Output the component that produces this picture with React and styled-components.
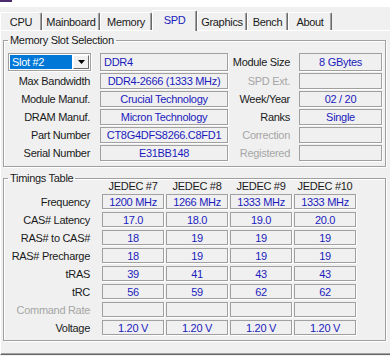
import React from 'react';
import styled, { createGlobalStyle } from 'styled-components';

const GlobalStyle = createGlobalStyle`
  html, body {
    margin: 0;
    padding: 0;
  }
  body {
    background: #f0f0f0;
    font-family: "Liberation Sans", Arial, sans-serif;
    font-size: 11px;
    letter-spacing: -0.3px;
    color: #1a1a1a;
    overflow: hidden;
  }
`;

const Window = styled.div`
  width: 390px;
  height: 356px;
  overflow: hidden;
  background: #f0f0f0;
`;

const TitleStrip = styled.div`
  height: 7px;
  background: #ffffff;
`;

const Accent = styled.div`
  width: 12px;
  height: 2px;
  background: #4b2b6e;
`;

const TabBar = styled.div`
  display: flex;
  align-items: flex-end;
  height: 23px;
`;

const Tab = styled.div`
  box-sizing: border-box;
  width: ${(p) => p.$w}px;
  height: ${(p) => (p.$active ? 21 : 18)}px;
  margin-bottom: ${(p) => (p.$active ? -1 : 0)}px;
  position: relative;
  z-index: ${(p) => (p.$active ? 2 : 1)};
  display: flex;
  align-items: center;
  justify-content: center;
  padding-bottom: ${(p) => (p.$active ? 2 : 0)}px;
  background: #f0f0f0;
  border-top: 1px solid #ffffff;
  border-left: 1px solid #ffffff;
  border-right: 1px solid #696969;
  box-shadow: inset -1px 0 0 #a0a0a0;
  border-radius: 2px 2px 0 0;
  color: ${(p) => (p.$active ? '#1b1bbd' : '#1a1a1a')};
  white-space: nowrap;
`;

const Panel = styled.div`
  box-sizing: border-box;
  height: 325px;
  border-top: 1px solid #ffffff;
  border-left: 1px solid #ffffff;
  border-bottom: 1px solid #696969;
  box-shadow: inset 0 -1px 0 #a0a0a0;
  padding: 3px 0 0 2px;
`;

const Group = styled.fieldset`
  box-sizing: border-box;
  width: 383px;
  margin: ${(p) => p.$top}px 0 0 0;
  padding: 0 0 5px 0;
  border: 1px solid #a0a0a0;
  box-shadow: inset 1px 1px 0 #ffffff, 1px 1px 0 #ffffff;
  min-width: 0;
`;

const Legend = styled.legend`
  margin-left: 4px;
  padding: 0 2px;
  line-height: 13px;
  color: #1a1a1a;
`;

const SlotGrid = styled.div`
  display: grid;
  grid-template-columns: 92px 128px 71px 83px;
  grid-template-rows: 18px repeat(5, 16px);
  row-gap: 2px;
  padding: 6px 0 0 4px;
`;

const TimingGrid = styled.div`
  display: grid;
  grid-template-columns: 92px repeat(4, 62px);
  grid-template-rows: 11px repeat(8, 15px);
  column-gap: 2px;
  row-gap: 3px;
  margin-top: -5px;
  padding-left: 4px;
`;

const Label = styled.div`
  display: flex;
  align-items: center;
  justify-content: flex-end;
  padding-right: ${(p) => p.$pad || 10}px;
  white-space: nowrap;
  color: ${(p) => (p.$disabled ? '#a6a6a6' : '#1a1a1a')};
`;

const Header = styled.div`
  display: flex;
  align-items: center;
  justify-content: center;
  white-space: nowrap;
  color: #1a1a1a;
`;

const Field = styled.div`
  box-sizing: border-box;
  display: flex;
  align-items: center;
  justify-content: ${(p) => (p.$left ? 'flex-start' : 'center')};
  padding-left: ${(p) => (p.$left ? 3 : 0)}px;
  border: 1px solid #a0a0a0;
  box-shadow: 1px 1px 0 #ffffff;
  color: #1b1bbd;
  white-space: nowrap;
  overflow: hidden;
`;

const Combo = styled.div`
  box-sizing: border-box;
  width: 83px;
  display: flex;
  padding: 1px;
  background: #ffffff;
  border: 1px solid #a0a0a0;
  box-shadow: 1px 1px 0 #ffffff;
`;

const ComboValue = styled.div`
  flex: 1;
  display: flex;
  align-items: center;
  padding-left: 2px;
  background: #0078d7;
  color: #ffffff;
  white-space: nowrap;
`;

const ComboButton = styled.div`
  box-sizing: border-box;
  width: 16px;
  margin-left: 1px;
  display: flex;
  align-items: center;
  justify-content: center;
  background: #f0f0f0;
  border-top: 1px solid #ffffff;
  border-left: 1px solid #ffffff;
  border-right: 1px solid #696969;
  border-bottom: 1px solid #696969;
`;

const tabs = [
  { name: 'CPU', w: 42 },
  { name: 'Mainboard', w: 58 },
  { name: 'Memory', w: 52 },
  { name: 'SPD', w: 45, active: true },
  { name: 'Graphics', w: 50 },
  { name: 'Bench', w: 41 },
  { name: 'About', w: 44 },
];

const slotRows = [
  { label: 'Max Bandwidth', value: 'DDR4-2666 (1333 MHz)', label2: 'SPD Ext.', off2: true, value2: '' },
  { label: 'Module Manuf.', value: 'Crucial Technology', label2: 'Week/Year', value2: '02 / 20' },
  { label: 'DRAM Manuf.', value: 'Micron Technology', label2: 'Ranks', value2: 'Single' },
  { label: 'Part Number', value: 'CT8G4DFS8266.C8FD1', label2: 'Correction', off2: true, value2: '' },
  { label: 'Serial Number', value: 'E31BB148', label2: 'Registered', off2: true, value2: '' },
];

const jedec = ['JEDEC #7', 'JEDEC #8', 'JEDEC #9', 'JEDEC #10'];

const timings = [
  { label: 'Frequency', values: ['1200 MHz', '1266 MHz', '1333 MHz', '1333 MHz'] },
  { label: 'CAS# Latency', values: ['17.0', '18.0', '19.0', '20.0'] },
  { label: 'RAS# to CAS#', values: ['18', '19', '19', '19'] },
  { label: 'RAS# Precharge', values: ['18', '19', '19', '19'] },
  { label: 'tRAS', values: ['39', '41', '43', '43'] },
  { label: 'tRC', values: ['56', '59', '62', '62'] },
  { label: 'Command Rate', off: true, values: ['', '', '', ''] },
  { label: 'Voltage', values: ['1.20 V', '1.20 V', '1.20 V', '1.20 V'] },
];

function App() {
  return (
    <Window>
      <GlobalStyle />
      <TitleStrip>
        <Accent />
      </TitleStrip>
      <TabBar>
        {tabs.map((t) => (
          <Tab key={t.name} $w={t.w} $active={t.active}>
            {t.name}
          </Tab>
        ))}
      </TabBar>
      <Panel>
        <Group $top={0}>
          <Legend>Memory Slot Selection</Legend>
          <SlotGrid>
            <Combo>
              <ComboValue>Slot #2</ComboValue>
              <ComboButton>
                <svg width="7" height="4" viewBox="0 0 7 4">
                  <path d="M0 0h7L3.5 4z" fill="#000" />
                </svg>
              </ComboButton>
            </Combo>
            <Field $left>DDR4</Field>
            <Label $pad={9}>Module Size</Label>
            <Field>8 GBytes</Field>
            {slotRows.map((r) => (
              <React.Fragment key={r.label}>
                <Label>{r.label}</Label>
                <Field>{r.value}</Field>
                <Label $pad={9} $disabled={r.off2}>{r.label2}</Label>
                <Field>{r.value2}</Field>
              </React.Fragment>
            ))}
          </SlotGrid>
        </Group>
        <Group $top={5}>
          <Legend>Timings Table</Legend>
          <TimingGrid>
            <div />
            {jedec.map((j) => (
              <Header key={j}>{j}</Header>
            ))}
            {timings.map((row) => (
              <React.Fragment key={row.label}>
                <Label $disabled={row.off}>{row.label}</Label>
                {row.values.map((v, i) => (
                  <Field key={i}>{v}</Field>
                ))}
              </React.Fragment>
            ))}
          </TimingGrid>
        </Group>
      </Panel>
    </Window>
  );
}

export default App;
